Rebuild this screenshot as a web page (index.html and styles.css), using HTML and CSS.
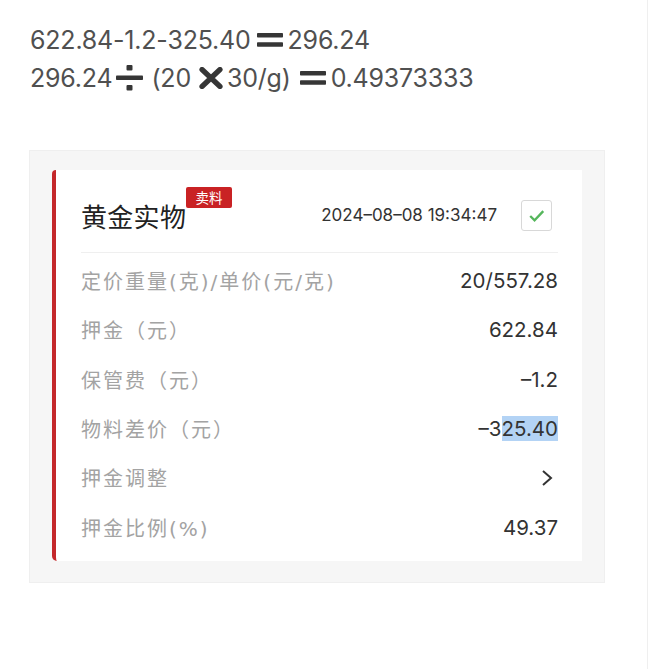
FILE: index.html
```html
<!DOCTYPE html>
<html lang="zh-CN">
<head>
<meta charset="utf-8">
<link rel="stylesheet" href="styles.css">
</head>
<body>
<div class="page">
  <div class="formula">
    <div class="fline">622.84-1.2-325.40<svg class="op eq" viewBox="0 0 26 14"><rect x="0" y="0" width="26" height="4.6" rx="0.8"/><rect x="0" y="9.2" width="26" height="4.6" rx="0.8"/></svg>296.24</div>
    <div class="fline">296.24<svg class="op div" viewBox="0 0 27 26"><rect x="10.5" y="0" width="6" height="5.5" rx="1"/><rect x="0" y="10.5" width="27" height="4.6" rx="0.8"/><rect x="10.5" y="20" width="6" height="5.5" rx="1"/></svg>(20<svg class="op mul" viewBox="0 0 24 22"><path d="M3 2.5 L21 19.5 M21 2.5 L3 19.5" stroke-width="5.2" stroke-linecap="round"/></svg>30/g)<svg class="op eq eq2" viewBox="0 0 26 14"><rect x="0" y="0" width="26" height="4.6" rx="0.8"/><rect x="0" y="9.2" width="26" height="4.6" rx="0.8"/></svg>0.49373333</div>
  </div>

  <div class="panel">
    <div class="card">
      <div class="head">
        <div class="title">黄金实物<span class="badge">卖料</span></div>
        <div class="date">2024–08–08 19:34:47</div>
        <div class="check"><svg viewBox="0 0 30 30"><polyline points="8.5,15.5 13,20 22,10.5"/></svg></div>
      </div>
      <div class="rows">
        <div class="row"><span class="label">定价重量(克)/单价(元/克)</span><span class="value">20/557.28</span></div>
        <div class="row"><span class="label">押金（元）</span><span class="value">622.84</span></div>
        <div class="row"><span class="label">保管费（元）</span><span class="value">–1.2</span></div>
        <div class="row"><span class="label">物料差价（元）</span><span class="value">–3<span class="sel">25.40</span></span></div>
        <div class="row"><span class="label">押金调整</span><span class="value"><svg class="chev" viewBox="0 0 12 18"><polyline points="2,2 10,9 2,16"/></svg></span></div>
        <div class="row"><span class="label">押金比例(%)</span><span class="value">49.37</span></div>
      </div>
    </div>
  </div>
</div>
</body>
</html>
```

FILE: styles.css
```css
html, body {
  margin: 0;
  padding: 0;
  background: #ffffff;
}

.page {
  width: 647px;
  height: 669px;
  border-right: 1px solid #efefef;
  font-family: Inter, "Noto Sans CJK SC", sans-serif;
}

.formula {
  padding: 21px 0 0 30px;
  color: #505050;
  font-size: 25px;
  letter-spacing: -0.2px;
}

.fline {
  height: 38px;
  line-height: 38px;
  display: flex;
  align-items: center;
  white-space: nowrap;
}

.op {
  fill: #363636;
  stroke: #363636;
  flex: none;
}

.op rect { stroke: none; }

.eq {
  width: 26px;
  height: 14px;
  margin: 0 5px 0 6px;
}

.eq2 {
  margin-left: 9px;
}

.div {
  width: 27px;
  height: 26px;
  margin: 0 8px 0 4px;
}

.mul {
  width: 24px;
  height: 22px;
  margin: 0 4px 0 8px;
  fill: none;
}

.panel {
  margin: 53px 0 0 29px;
  width: 576px;
  box-sizing: border-box;
  background: #f6f6f6;
  border: 1px solid #efefef;
  padding: 19px 22px 21px 22px;
}

.card {
  background: #ffffff;
  border-left: 4px solid #c4282b;
  border-radius: 4px 0 0 5px;
  height: 391px;
  box-sizing: border-box;
  padding: 0 24px 0 25px;
}

.head {
  display: flex;
  align-items: center;
  height: 83px;
  box-sizing: border-box;
  padding-top: 8px;
  border-bottom: 1px solid #efefef;
}

.title {
  position: relative;
  font-family: "Noto Sans CJK SC", sans-serif;
  font-size: 26px;
  letter-spacing: 0.3px;
  color: #222;
  flex: 1;
}

.badge {
  position: absolute;
  left: 105px;
  top: -10px;
  width: 46px;
  height: 21px;
  line-height: 21px;
  text-align: center;
  background: #c92224;
  color: #fff;
  font-size: 13.5px;
  letter-spacing: 0;
  border-radius: 2px;
}

.date {
  font-size: 17px;
  color: #333;
  letter-spacing: 0;
  margin-right: 24px;
}

.check {
  width: 31px;
  height: 31px;
  box-sizing: border-box;
  border: 1px solid #d8d8d8;
  border-radius: 3px;
  margin-right: 6px;
  display: flex;
}

.check svg {
  width: 29px;
  height: 29px;
  fill: none;
  stroke: #55b65c;
  stroke-width: 2.4;
}

.rows {
  padding-top: 3px;
}

.row {
  height: 49.3px;
  display: flex;
  align-items: center;
  justify-content: space-between;
}

.label {
  font-family: "DejaVu Sans", "Noto Sans CJK SC", sans-serif;
  font-size: 20px;
  letter-spacing: 2px;
  color: #a3a3a3;
}

.value {
  font-size: 20.5px;
  color: #333;
  display: flex;
  align-items: center;
}

.sel {
  background: #b3d3f5;
  line-height: 25px;
}

.chev {
  width: 12px;
  height: 18px;
  margin-right: 5px;
  fill: none;
  stroke: #333;
  stroke-width: 2;
}
```
